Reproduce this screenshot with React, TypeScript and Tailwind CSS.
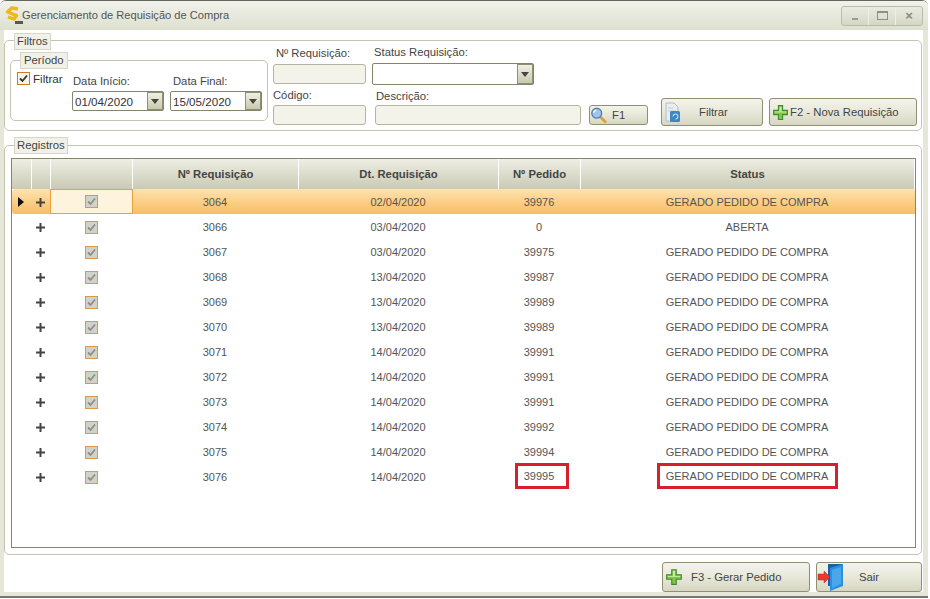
import React from "react";

const rows = [
  ["3064", "02/04/2020", "39976", "GERADO PEDIDO DE COMPRA"],
  ["3066", "03/04/2020", "0", "ABERTA"],
  ["3067", "03/04/2020", "39975", "GERADO PEDIDO DE COMPRA"],
  ["3068", "13/04/2020", "39987", "GERADO PEDIDO DE COMPRA"],
  ["3069", "13/04/2020", "39989", "GERADO PEDIDO DE COMPRA"],
  ["3070", "13/04/2020", "39989", "GERADO PEDIDO DE COMPRA"],
  ["3071", "14/04/2020", "39991", "GERADO PEDIDO DE COMPRA"],
  ["3072", "14/04/2020", "39991", "GERADO PEDIDO DE COMPRA"],
  ["3073", "14/04/2020", "39991", "GERADO PEDIDO DE COMPRA"],
  ["3074", "14/04/2020", "39992", "GERADO PEDIDO DE COMPRA"],
  ["3075", "14/04/2020", "39994", "GERADO PEDIDO DE COMPRA"],
  ["3076", "14/04/2020", "39995", "GERADO PEDIDO DE COMPRA"],
];

const cols = "grid grid-cols-[20px_19px_82px_166px_200px_82px_334px]";

function Arrow() {
  return (
    <span className="w-[16px] h-full flex items-center justify-center border border-[#8f8f72] bg-gradient-to-b from-[#f0f0e2] to-[#c9c9ae] shrink-0">
      <svg width="8" height="5" viewBox="0 0 8 5"><path d="M0 0h8L4 5z" fill="#444" /></svg>
    </span>
  );
}

function Combo({ value, className }: { value: string; className: string }) {
  return (
    <div className={`flex items-stretch h-[20px] border border-[#85856b] rounded-[2px] bg-white text-[11.6px] text-[#333] ${className}`}>
      <span className="flex-1 pl-[2px] leading-[19px]">{value}</span>
      <Arrow />
    </div>
  );
}

function Field({ className }: { className: string }) {
  return <div className={`h-[20px] border border-[#b4b4a0] rounded-[3px] bg-[#f3f3ea] ${className}`} />;
}

function Plus({ size = 17 }: { size?: number }) {
  return (
    <svg width={size} height={size} viewBox="0 0 16 16" className="shrink-0">
      <path d="M6 1.500h4v4.500h4.500v4H10v4.500H6V10H1.500V6H6z" fill="#7fc64a" stroke="#3f8a2c" strokeWidth="1" />
      <path d="M7 2.500h2V7h4.500v1H2.500V7H7z" fill="#c3eb9a" />
    </svg>
  );
}

function Glass() {
  return (
    <svg width="17" height="18" viewBox="0 0 19 19" className="shrink-0">
      <path d="M10 10l7 7" stroke="#d9a23a" strokeWidth="3" strokeLinecap="round" />
      <circle cx="7.500" cy="7.500" r="5.500" fill="#9cc6ee" stroke="#5d7fa6" strokeWidth="1.500" />
      <path d="M4 7a4 4 0 0 1 3-3" stroke="#fff" strokeWidth="1.500" fill="none" />
    </svg>
  );
}

function DocIcon() {
  return (
    <svg width="16" height="22" viewBox="0 0 16 22" className="shrink-0">
      <path d="M1 2h8l4 4v14H1z" fill="#e9ecf0" stroke="#b3bcc8" />
      <path d="M3 7h5M3 10h8" stroke="#c3cad3" />
      <rect x="5" y="10" width="10" height="11" rx="1.500" fill="#3f86c9" />
      <path d="M8 15.500a2.500 2.500 0 1 1 2.500 2.500" stroke="#dff0ff" fill="none" />
    </svg>
  );
}

function Door() {
  return (
    <svg width="28" height="30" viewBox="0 0 28 30" className="shrink-0">
      <path d="M11 2h15v22H11z" fill="#1c5fa8" />
      <path d="M13 6l13-4v22l-13 5z" fill="#2a8fe0" />
      <path d="M15 8l9-3v17l-9 4z" fill="#4aa8ea" />
      <path d="M1 12h6V9l6 6-6 6v-3H1z" fill="#e8392f" stroke="#b92a22" strokeWidth="0.500" />
    </svg>
  );
}

function Logo() {
  return (
    <svg width="18" height="19" viewBox="0 0 18 19" className="shrink-0">
      <path d="M13 3L7 1.800 2.500 6l9 3.500L9 13l-6-2" stroke="#f0b71d" strokeWidth="3.400" fill="none" strokeLinejoin="round" />
      <rect x="10" y="15" width="8" height="3" fill="#5a5a4a" />
    </svg>
  );
}

function Btn({ children, className }: { children: React.ReactNode; className: string }) {
  return (
    <div className={`flex items-center shrink-0 border border-[#8f8f72] rounded-[3px] bg-gradient-to-b from-[#f3f3ea] via-[#e8e8da] to-[#d6d6c2] text-[11.3px] text-[#444] ${className}`}>
      {children}
    </div>
  );
}

function Legend({ children, className }: { children: React.ReactNode; className: string }) {
  return (
    <span className={`absolute bg-[#f1f1e7] border border-[#d6d6c6] px-[2px] h-[17px] leading-[15px] text-[11.3px] text-[#444] ${className}`}>
      {children}
    </span>
  );
}

function Check({ dim }: { dim?: boolean }) {
  return (
    <span className={`flex w-[13px] h-[13px] items-center justify-center border shrink-0 ${dim ? "border-[#d79a4a] bg-[#d2d2c8]" : "border-[#c77d2e] bg-[#f7f3e6]"}`}>
      <svg width="9" height="9" viewBox="0 0 9 9">
        <path d="M1 4.500l2.500 2.500L8 1.500" stroke={dim ? "#8a8f8b" : "#333"} strokeWidth="1.800" fill="none" />
      </svg>
    </span>
  );
}

function Th({ children }: { children?: React.ReactNode }) {
  return (
    <div className="h-[30px] flex items-center justify-center border-r border-white bg-gradient-to-b from-[#eeeee4] via-[#dcdccb] to-[#c9c9b5] font-bold text-[11.3px] text-[#444]">
      {children}
    </div>
  );
}

function Cell({ children }: { children?: React.ReactNode }) {
  return <div className="flex items-center justify-center h-[25px] pr-[2px] pt-[1px]">{children}</div>;
}

export default function App() {
  return (
    <div className="w-[930px] h-[599px] bg-white font-['Liberation_Sans',Arial,sans-serif]">
      <div className="w-[928px] h-[598px] flex flex-col overflow-hidden rounded-t-[6px] border-t border-[#66665c] border-b-2 border-b-[#77776b]">
        <div className="h-[29px] shrink-0 flex items-center pl-[5px] pr-[5px] bg-gradient-to-b from-[#f1f2ea] to-[#dde0cf]">
          <Logo />
          <span className="ml-[-1px] text-[11.1px] text-[#555]">Gerenciamento de Requisição de Compra</span>
          <div className="ml-auto flex h-[20px] w-[82px] border border-[#b9bcab] rounded-[3px] bg-gradient-to-b from-[#e9ebdf] to-[#d5d7c5] text-[#8a8a80]">
            <span className="flex-1 flex items-end justify-center pb-[5px] border-r border-[#eef0e6]"><span className="w-[6px] h-[2px] bg-[#9a9a90]" /></span>
            <span className="w-[27px] flex items-center justify-center border-r border-[#eef0e6]"><span className="w-[11px] h-[9px] border border-[#8f8f86] border-t-2" /></span>
            <span className="flex-1 flex items-center justify-center text-[13px] leading-none font-bold">×</span>
          </div>
        </div>

        <div className="flex-1 flex flex-col bg-white border-l-4 border-r-[5px] border-b-4 border-[#e6e7d9] pr-[1px] pt-[10px]">
          <section className="relative h-[91px] shrink-0 flex border border-[#c4c4b0] rounded-[5px] pl-[5px]">
            <Legend className="left-[9px] top-[-8px]">Filtros</Legend>

            <div className="relative mt-[19px] w-[258px] h-[61px] shrink-0 border border-[#c4c4b0] rounded-[5px] flex pl-[6px]">
              <Legend className="left-[9px] top-[-9px] px-[3px]">Período</Legend>
              <div className="flex items-start mt-[11px] gap-[3px] w-[55px] text-[11.6px] text-[#333]">
                <Check />
                <span className="leading-[14px]">Filtrar</span>
              </div>
              <div className="flex flex-col mt-[13px]">
                <span className="pl-[1px] text-[11.25px] leading-[14px] text-[#444] h-[17px]">Data Início:</span>
                <Combo value="01/04/2020" className="w-[92px]" />
              </div>
              <div className="flex flex-col mt-[13px] ml-[6px]">
                <span className="pl-[3px] text-[11.25px] leading-[14px] text-[#444] h-[17px]">Data Final:</span>
                <Combo value="15/05/2020" className="w-[92px]" />
              </div>
            </div>

            <div className="flex flex-col ml-[5px] w-[93px] shrink-0 mt-[5px]">
              <span className="pl-[3px] h-[18px] text-[11.25px] leading-[14px] text-[#444]">Nº Requisição:</span>
              <Field className="w-[93px]" />
              <span className="h-[21px] pt-[3px] text-[11.25px] leading-[16px] text-[#444]">Código:</span>
              <Field className="w-[93px]" />
            </div>

            <div className="flex flex-col ml-[6px] mt-[3px] w-[209px] shrink-0">
              <span className="pl-[2px] h-[19px] text-[11.25px] leading-[16px] text-[#444]">Status Requisição:</span>
              <Combo value="" className="w-[162px] !h-[22px]" />
              <span className="pl-[4px] h-[20px] pt-[3px] text-[11.25px] leading-[16px] text-[#444]">Descrição:</span>
              <Field className="ml-[3px] w-[206px]" />
            </div>

            <Btn className="ml-[8px] mt-[64px] w-[59px] h-[20px] gap-[5px]">
              <Glass /><span>F1</span>
            </Btn>

            <Btn className="ml-[13px] mt-[57px] w-[102px] h-[28px] pl-[3px]">
              <DocIcon /><span className="ml-[18px]">Filtrar</span>
            </Btn>

            <Btn className="ml-[6px] mt-[57px] w-[148px] h-[28px] pl-[2px] gap-[1px]">
              <Plus /><span>F2 - Nova Requisição</span>
            </Btn>
          </section>

          <section className="relative mt-[14px] h-[410px] shrink-0 border border-[#c4c4b0] rounded-[5px] pl-[6px] pt-[12px]">
            <Legend className="left-[9px] top-[-9px]">Registros</Legend>
            <div className="w-[905px] h-[390px] border border-[#85856b] bg-white">
              <div className={cols}>
                <Th /><Th /><Th />
                <Th>Nº Requisição</Th>
                <Th>Dt. Requisição</Th>
                <Th>Nº Pedido</Th>
                <Th>Status</Th>
              </div>
              {rows.map((r, i) => {
                const sel = i === 0;
                const last = i === rows.length - 1;
                return (
                  <div
                    key={r[0]}
                    className={`${cols} text-[11px] text-[#555] ${sel ? "rounded-l-[3px] bg-gradient-to-b from-[#fee3b0] via-[#fbcf87] to-[#f9bd66]" : "bg-white"}`}
                  >
                    <Cell>
                      {sel && <svg width="6" height="10" viewBox="0 0 6 10"><path d="M0 0l6 5-6 5z" fill="#111" /></svg>}
                    </Cell>
                    <Cell>
                      <svg width="9" height="9" viewBox="0 0 9 9"><path d="M4.500 0v9M0 4.500h9" stroke="#444" strokeWidth="2" /></svg>
                    </Cell>
                    <div className={`flex items-center justify-center h-[25px] pr-[1px] ${sel ? "ml-[-1px] border border-[#e8a33d] bg-[#fef3dc]" : "pr-[2px] pt-[1px]"}`}>
                      <Check dim />
                    </div>
                    <Cell>{r[0]}</Cell>
                    <Cell>{r[1]}</Cell>
                    <Cell>
                      {last ? <span className="w-[54px] h-[26px] ml-[5px] pr-[5px] mt-[-2px] shrink-0 flex items-center justify-center border-[3px] border-[#d8202c] bg-white">{r[2]}</span> : r[2]}
                    </Cell>
                    <Cell>
                      {last ? <span className="w-[181px] h-[26px] mt-[-2px] shrink-0 flex items-center justify-center border-[3px] border-[#d8202c] bg-white whitespace-nowrap">{r[3]}</span> : r[3]}
                    </Cell>
                  </div>
                );
              })}
            </div>
          </section>

          <div className="flex justify-end gap-[6px] pt-[7px]">
            <Btn className="w-[148px] h-[30px] pl-[2px]">
              <Plus size={18} /><span className="ml-[8px]">F3 - Gerar Pedido</span>
            </Btn>
            <Btn className="w-[106px] h-[30px]">
              <Door /><span className="ml-[14px]">Sair</span>
            </Btn>
          </div>
        </div>
      </div>
    </div>
  );
}
